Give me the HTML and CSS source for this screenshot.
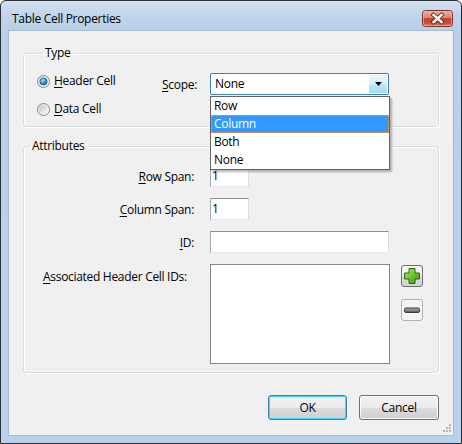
FILE: index.html
```html
<!DOCTYPE html>
<html>
<head>
<meta charset="utf-8">
<link rel="stylesheet" href="styles.css">
</head>
<body>
<div class="window">
  <div class="titlebar">
    <span class="title">Table Cell Properties</span>
    <span class="close">
      <svg width="31" height="17" viewBox="0 0 31 17">
        <defs>
          <linearGradient id="cg" x1="0" y1="0" x2="0" y2="1">
            <stop offset="0" stop-color="#eab3a6"/>
            <stop offset="0.45" stop-color="#d88473"/>
            <stop offset="0.5" stop-color="#c2442f"/>
            <stop offset="0.8" stop-color="#c84c36"/>
            <stop offset="1" stop-color="#e29379"/>
          </linearGradient>
        </defs>
        <rect x="0.5" y="0.5" width="30" height="16" rx="3" fill="url(#cg)" stroke="#7a3329"/>
        <rect x="1.5" y="1.5" width="28" height="14" rx="2" fill="none" stroke="#f0c0b4" stroke-opacity="0.6"/>
        <path d="M11.5 5 L19.5 12 M19.5 5 L11.5 12" stroke="#5b2c24" stroke-width="4.2" stroke-linecap="square"/>
        <path d="M11.5 5 L19.5 12 M19.5 5 L11.5 12" stroke="#ffffff" stroke-width="2.4" stroke-linecap="square"/>
      </svg>
    </span>
  </div>
  <div class="client">
    <fieldset class="group type-group">
      <legend class="legend">Type</legend>
      <div class="type-row">
        <div class="radios">
          <label class="radio">
            <svg width="13" height="13" viewBox="0 0 13 13">
              <defs>
                <linearGradient id="ro" x1="0" y1="0" x2="1" y2="1">
                  <stop offset="0" stop-color="#d6d6d6"/>
                  <stop offset="1" stop-color="#ffffff"/>
                </linearGradient>
                <radialGradient id="rd" cx="0.4" cy="0.35" r="0.7">
                  <stop offset="0" stop-color="#a8e4ff"/>
                  <stop offset="0.5" stop-color="#3f9ee0"/>
                  <stop offset="1" stop-color="#15508c"/>
                </radialGradient>
              </defs>
              <circle cx="6.5" cy="6.5" r="6" fill="url(#ro)" stroke="#8a8a8a"/>
              <circle cx="6.5" cy="6.5" r="3.6" fill="url(#rd)" stroke="#1f5c8e" stroke-width="0.8"/>
            </svg>
            <span><u>H</u>eader Cell</span>
          </label>
          <label class="radio">
            <svg width="13" height="13" viewBox="0 0 13 13">
              <defs>
                <linearGradient id="ru" x1="0" y1="0" x2="1" y2="1">
                  <stop offset="0" stop-color="#c4c4c4"/>
                  <stop offset="1" stop-color="#f8f8f8"/>
                </linearGradient>
              </defs>
              <circle cx="6.5" cy="6.5" r="6" fill="url(#ro)" stroke="#8a8a8a"/>
              <circle cx="6.5" cy="6.5" r="4" fill="url(#ru)"/>
            </svg>
            <span><u>D</u>ata Cell</span>
          </label>
        </div>
        <div class="scope">
          <span class="scope-label"><u>S</u>cope:</span>
          <div class="combo-wrap">
            <div class="combo">
              <span class="combo-text">None</span>
              <span class="combo-btn">
                <svg width="7" height="4" viewBox="0 0 7 4"><path d="M0 0 H7 L3.5 4 Z" fill="#000"/></svg>
              </span>
            </div>
            <ul class="dropdown">
              <li class="item">Row</li>
              <li class="item selected">Column</li>
              <li class="item">Both</li>
              <li class="item">None</li>
            </ul>
          </div>
        </div>
      </div>
    </fieldset>

    <fieldset class="group attr-group">
      <legend class="legend">Attributes</legend>
      <div class="attr-grid">
        <span class="field-label"><u>R</u>ow Span:</span>
        <div class="edit edit-short">1</div>
        <span class="field-label"><u>C</u>olumn Span:</span>
        <div class="edit edit-short">1</div>
        <span class="field-label"><u>I</u>D:</span>
        <div class="edit edit-long"></div>
        <span class="field-label field-label-top"><u>A</u>ssociated Header Cell IDs:</span>
        <div class="list-row">
          <div class="listbox"></div>
          <div class="list-buttons">
            <span class="icon-btn">
              <svg width="20" height="20" viewBox="0 0 20 20">
                <defs>
                  <linearGradient id="pg" x1="0" y1="0" x2="1" y2="1">
                    <stop offset="0" stop-color="#b8ec6c"/>
                    <stop offset="0.5" stop-color="#6cc52a"/>
                    <stop offset="1" stop-color="#3d8f14"/>
                  </linearGradient>
                </defs>
                <path d="M7 2.5 H13 V7 H17.5 V13 H13 V17.5 H7 V13 H2.5 V7 H7 Z" fill="url(#pg)" stroke="#2d6510" stroke-linejoin="round"/>
              </svg>
            </span>
            <span class="icon-btn icon-btn-light">
              <svg width="20" height="20" viewBox="0 0 20 20">
                <defs>
                  <linearGradient id="mg" x1="0" y1="0" x2="0" y2="1">
                    <stop offset="0" stop-color="#b4b4b4"/>
                    <stop offset="1" stop-color="#555"/>
                  </linearGradient>
                </defs>
                <rect x="2.5" y="8" width="15" height="4.5" rx="1.5" fill="url(#mg)" stroke="#3a3a3a"/>
              </svg>
            </span>
          </div>
        </div>
      </div>
    </fieldset>

    <div class="buttons">
      <span class="button button-default">OK</span>
      <span class="button">Cancel</span>
    </div>

    <svg class="grip" width="10" height="10" viewBox="0 0 10 10">
      <g fill="#b8b8b8">
        <rect x="7" y="1" width="2" height="2"/>
        <rect x="4" y="4" width="2" height="2"/>
        <rect x="7" y="4" width="2" height="2"/>
        <rect x="1" y="7" width="2" height="2"/>
        <rect x="4" y="7" width="2" height="2"/>
        <rect x="7" y="7" width="2" height="2"/>
      </g>
    </svg>
  </div>
</div>
</body>
</html>
```

FILE: styles.css
```css
* { box-sizing: border-box; }

html, body {
  margin: 0;
  padding: 0;
  background: #ffffff;
}

body {
  font-family: "Open Sans", "Noto Sans", sans-serif;
  font-size: 12px;
  letter-spacing: -0.3px;
  line-height: 16px;
  color: #000;
  white-space: nowrap;
}

u { text-decoration: underline; text-underline-offset: 2px; }

.window {
  width: 462px;
  height: 444px;
  border: 1px solid #2b2f36;
  border-radius: 6px 6px 0 0;
  background: linear-gradient(#d3e1f0 0px, #c1d5ea 14px, #b7cfe8 30px, #b9d1ea 100%);
  display: flex;
  flex-direction: column;
}

.titlebar {
  height: 29px;
  display: flex;
  justify-content: space-between;
  align-items: flex-start;
  padding: 9px 8px 0 11px;
}

.title {
  font-size: 12px;
  color: #000;
  line-height: 16px;
  margin-top: 1px;
}

.close {
  display: block;
  width: 31px;
  height: 17px;
}
.close svg { display: block; }

.client {
  position: relative;
  margin: 0 7px;
  width: 446px;
  height: 406px;
  background: #f0f0f0;
  border: 1px solid #a6bbd0;
  padding: 14px 14px 0 14px;
  display: flex;
  flex-direction: column;
}

.group {
  margin: 0;
  border: 1px solid #d5dfe5;
  border-radius: 3px;
  box-shadow: inset 1px 1px 0 #ffffff, 1px 1px 0 #ffffff;
  min-width: 0;
}

.legend {
  padding: 0 2px;
  margin-left: 6px;
  line-height: 16px;
}

.type-group {
  padding: 0 0 9px 13px;
}

.type-row {
  display: flex;
  align-items: flex-start;
}

.radios {
  width: 125px;
  padding-top: 12px;
  display: flex;
  flex-direction: column;
  gap: 12px;
}

.radio {
  display: flex;
  align-items: center;
  gap: 4px;
  height: 16px;
}
.radio svg { display: block; flex: none; }

.scope {
  margin-top: 12px;
  display: flex;
  align-items: center;
  height: 22px;
}

.scope-label {
  width: 48px;
  padding-top: 2px;
}

.combo-wrap {
  position: relative;
}

.combo {
  width: 179px;
  height: 22px;
  border: 1px solid #3c7fb1;
  border-radius: 2px;
  background: #fff;
  display: flex;
  align-items: center;
  justify-content: space-between;
  padding: 0 1px 0 4px;
}

.combo-btn {
  width: 18px;
  height: 18px;
  display: flex;
  align-items: center;
  justify-content: center;
  background: linear-gradient(#eaf6fd 0%, #d9f0fc 50%, #bee6fd 50%, #a7d9f5 100%);
}
.combo-btn svg { display: block; }

.dropdown {
  position: absolute;
  left: 0;
  top: 23px;
  width: 180px;
  margin: 0;
  padding: 0;
  list-style: none;
  background: #fff;
  border: 1px solid #646464;
  box-shadow: 2px 2px 2px rgba(0, 0, 0, 0.28);
  z-index: 5;
}

.item {
  height: 18px;
  line-height: 18px;
  padding-left: 3px;
}

.item.selected {
  background: #3399ff;
  color: #fff;
  border: 1px dotted #d9a070;
  padding-left: 2px;
  line-height: 16px;
}

.attr-group {
  margin-top: 11px;
  padding: 11px 0 8px 0;
}

.attr-grid {
  display: grid;
  grid-template-columns: 170px auto;
  column-gap: 16px;
  row-gap: 11px;
  align-items: center;
}

.field-label {
  justify-self: end;
  padding-top: 1px;
}

.field-label-top {
  justify-self: start;
  align-self: start;
  padding-left: 19px;
  margin-top: 4px;
}

.edit {
  height: 22px;
  background: #fff;
  border: 1px solid;
  border-color: #8e8f8f #dcdfe4 #e3e9ef #a5a7ab;
  padding: 2px 0 0 1px;
  line-height: 16px;
}

.edit-short { width: 39px; }
.edit-long { width: 179px; }

.list-row {
  display: flex;
  gap: 11px;
  align-items: flex-start;
}

.listbox {
  width: 180px;
  height: 100px;
  background: #fff;
  border: 1px solid #828790;
}

.list-buttons {
  display: flex;
  flex-direction: column;
  gap: 12px;
  padding-top: 1px;
}

.icon-btn {
  width: 22px;
  height: 22px;
  border: 1px solid #707070;
  border-radius: 3px;
  background: linear-gradient(#f6f6f6 0%, #ebebeb 50%, #dddddd 50%, #d4d4d4 100%);
  display: flex;
  align-items: center;
  justify-content: center;
}
.icon-btn svg { display: block; }

.icon-btn-light {
  border-color: #adb2b5;
  background: #f4f4f4;
}

.buttons {
  margin-top: 22px;
  display: flex;
  justify-content: flex-end;
  gap: 12px;
}

.button {
  height: 25px;
  width: 80px;
  border: 1px solid #707070;
  border-radius: 3px;
  background: linear-gradient(#f2f2f2 0%, #ebebeb 50%, #dddddd 50%, #cfcfcf 100%);
  box-shadow: inset 0 0 0 1px #fcfcfc;
  display: flex;
  align-items: center;
  justify-content: center;
}

.button-default {
  width: 79px;
  border-color: #3c7fb1;
  box-shadow: inset 0 0 0 1px #48d3fb;
}

.grip {
  position: absolute;
  right: 1px;
  bottom: 2px;
}
```
